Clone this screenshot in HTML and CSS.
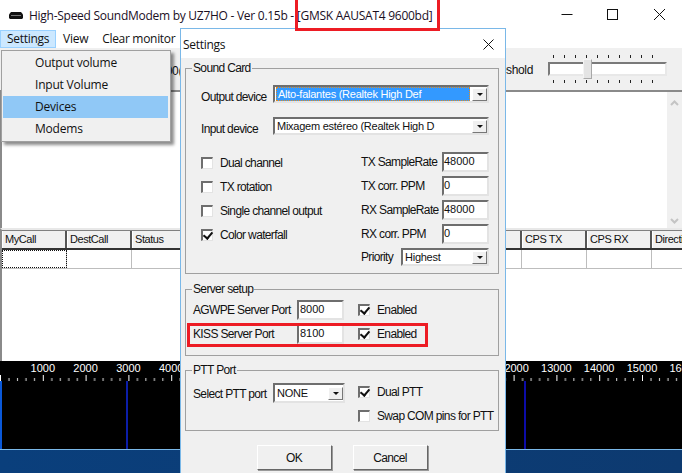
FILE: index.html
```html
<!DOCTYPE html>
<html lang="en">
<head>
<meta charset="utf-8">
<title>High-Speed SoundModem</title>
<link rel="stylesheet" href="styles.css">
</head>
<body>
<div class="app">
  <header class="titlebar">
    <svg class="appicon" width="14" height="7" viewBox="0 0 14 7"><path d="M2 0h10l2 2.500V6l-1 1H1L0 6V2.500z" fill="#111"/><rect x="2" y="3" width="10" height="1" fill="#777"/></svg>
    <span class="titletext">High-Speed SoundModem by UZ7HO - Ver 0.15b - [GMSK AAUSAT4 9600bd]</span>
    <div class="winctrls">
      <svg width="46" height="30" viewBox="0 0 46 30"><path d="M17.500 14.500h11" stroke="#111" fill="none"/></svg>
      <svg width="46" height="30" viewBox="0 0 46 30"><rect x="17.500" y="9.500" width="10" height="10" stroke="#111" fill="none"/></svg>
      <svg width="46" height="30" viewBox="0 0 46 30"><path d="M18 9l11 11M29 9L18 20" stroke="#111" fill="none"/></svg>
    </div>
  </header>
  <nav class="menubar">
    <span class="menuitem open">Settings</span>
    <span class="menuitem">View</span>
    <span class="menuitem">Clear monitor</span>
  </nav>
  <div class="toolbar">
    <span class="tbvalue">1000(</span>
    <span class="thlabel">DCD threshold</span>
    <div class="slider">
      <div class="sl-ticks"></div>
      <div class="sl-track"><div class="sl-thumb"></div></div>
      <div class="sl-ticks"></div>
    </div>
  </div>
  <div class="monitor">
    <div class="scrollbar">
      <svg width="9" height="6" viewBox="0 0 9 6"><path d="M1 5l3.500-3.500L8 5" stroke="#c4c4c4" stroke-width="2" fill="none"/></svg>
      <svg width="9" height="6" viewBox="0 0 9 6"><path d="M1 1l3.500 3.500L8 1" stroke="#c4c4c4" stroke-width="2" fill="none"/></svg>
    </div>
  </div>
  <div class="tablewrap">
    <div class="thead">
      <div class="th">MyCall</div><div class="th">DestCall</div><div class="th">Status</div><div class="th">Sent pkts</div><div class="th">Sent bytes</div><div class="th">Rcvd pkts</div><div class="th">Rcvd bytes</div><div class="th">Rcvd FC</div><div class="th">CPS TX</div><div class="th">CPS RX</div><div class="th">Direction</div>
    </div>
    <div class="trow">
      <div class="td focus"></div><div class="td"></div><div class="td"></div><div class="td"></div><div class="td"></div><div class="td"></div><div class="td"></div><div class="td"></div><div class="td"></div><div class="td"></div><div class="td"></div>
    </div>
  </div>
  <div class="scope">
    <div class="ruler">
      <span></span><span>1000</span><span>2000</span><span>3000</span><span>4000</span><span>5000</span><span>6000</span><span>7000</span><span>8000</span><span>9000</span><span>10000</span><span>11000</span><span>12000</span><span>13000</span><span>14000</span><span>15000</span><span>16000</span>
    </div>
    <svg class="ticks" width="682" height="6" viewBox="0 0 682 6">
      <defs>
        <pattern id="tk" width="42.800" height="6" patternUnits="userSpaceOnUse">
          <rect x="0" y="0" width="1" height="6" fill="#fff"/>
          <rect x="8.500" y="3" width="1" height="3" fill="#ddd"/>
          <rect x="17" y="3" width="1" height="3" fill="#ddd"/>
          <rect x="25.500" y="3" width="1" height="3" fill="#ddd"/>
          <rect x="34" y="3" width="1" height="3" fill="#ddd"/>
        </pattern>
      </defs>
      <rect width="682" height="6" fill="url(#tk)"/>
    </svg>
    <div class="waterfall">
      <i class="wf wf-edge"></i><i class="wf wf-a"></i><i class="wf wf-b"></i>
    </div>
  </div>
  <div class="desktop"></div>
</div>

<div class="dropdown">
  <div class="dd-item">Output volume</div>
  <div class="dd-item">Input Volume</div>
  <div class="dd-item sel">Devices</div>
  <div class="dd-item">Modems</div>
</div>

<section class="dialog">
  <div class="dlg-title">
    <span>Settings</span>
    <svg width="11" height="11" viewBox="0 0 11 11"><path d="M.5.500l10 10M10.500.500l-10 10" stroke="#111" fill="none"/></svg>
  </div>
  <div class="dlg-body">
    <fieldset class="group g-sound">
      <legend>Sound Card</legend>
      <div class="group-in in-sound">
        <div class="devrow"><label>Output device</label><div class="combo wide"><span class="value selected">Alto-falantes (Realtek High Def</span><b class="arrow"></b></div></div>
        <div class="devrow"><label>Input device</label><div class="combo wide"><span class="value">Mixagem estéreo (Realtek High D</span><b class="arrow"></b></div></div>
        <div class="soundcols">
          <div class="checks">
            <label class="chk"><i class="box"></i>Dual channel</label>
            <label class="chk"><i class="box"></i>TX rotation</label>
            <label class="chk"><i class="box"></i>Single channel output</label>
            <label class="chk"><i class="box on"></i>Color waterfall</label>
          </div>
          <div class="rates">
            <div class="rate"><label>TX SampleRate</label><div class="field">48000</div></div>
            <div class="rate"><label>TX corr. PPM</label><div class="field">0</div></div>
            <div class="rate"><label>RX SampleRate</label><div class="field">48000</div></div>
            <div class="rate"><label>RX corr. PPM</label><div class="field">0</div></div>
            <div class="rate prio"><label>Priority</label><div class="combo pr"><span class="value">Highest</span><b class="arrow"></b></div></div>
          </div>
        </div>
      </div>
    </fieldset>
    <fieldset class="group g-server">
      <legend>Server setup</legend>
      <div class="group-in in-server">
        <div class="srv"><label>AGWPE Server Port</label><div class="field port">8000</div><label class="chk"><i class="box on"></i>Enabled</label></div>
        <div class="srv"><label>KISS Server Port</label><div class="field port">8100</div><label class="chk"><i class="box on"></i>Enabled</label></div>
      </div>
    </fieldset>
    <fieldset class="group g-ptt">
      <legend>PTT Port</legend>
      <div class="group-in in-ptt">
        <div class="pttrow">
          <label>Select PTT port</label>
          <div class="combo ptt"><span class="value">NONE</span><b class="arrow"></b></div>
          <div class="pttchecks">
            <label class="chk"><i class="box on"></i>Dual PTT</label>
            <label class="chk"><i class="box"></i>Swap COM pins for PTT</label>
          </div>
        </div>
      </div>
    </fieldset>
    <div class="buttons"><button class="btn">OK</button><button class="btn">Cancel</button></div>
  </div>
</section>

<div class="mark mark-title"></div>
<div class="mark mark-kiss"></div>
</body>
</html>
```
FILE: styles.css
```css
* { box-sizing: border-box; }
html, body { margin: 0; padding: 0; }
body {
  width: 682px; height: 473px; overflow: hidden; position: relative;
  background: #fff; color: #111;
  font: 12px "Liberation Sans", Arial, sans-serif;
}
label { white-space: nowrap; }
.app { display: flex; flex-direction: column; width: 682px; height: 473px; }

.titlebar { height: 30px; flex: none; display: flex; align-items: center; padding-left: 9px; background: #fff; }
.titletext { margin-left: 6px; font-family: "Open Sans", sans-serif; font-size: 12px; letter-spacing: -0.27px; color: #1a0f1f; white-space: nowrap; }
.winctrls { margin-left: auto; display: flex; }
.winctrls svg { display: block; }

.menubar { height: 18px; flex: none; display: flex; background: #fff; font-family: "Open Sans", sans-serif; }
.menuitem { padding: 0 6px; letter-spacing: -0.3px; border: 1px solid transparent; height: 18px; line-height: 16px; white-space: nowrap; }
.menuitem.open { background: #cce8ff; border-color: #99d1ff; }

.toolbar { height: 44px; flex: none; background: #f0f0f0; border-bottom: 2px solid #8a8a8a; display: flex; align-items: center; padding: 0 15px 0 153px; }
.tbvalue { margin-right: auto; margin-top: 3px; letter-spacing: -0.3px; }
.thlabel { margin-right: 15px; margin-top: 1px; letter-spacing: -0.35px; }
.slider { width: 119px; display: flex; flex-direction: column; gap: 4px; }
.sl-ticks { height: 3px; background: repeating-linear-gradient(90deg, #222 0 1px, transparent 1px 11px); margin: 0 5px; }
.sl-track { height: 14px; border: 2px solid; border-color: #7a7a7a #e8e8e8 #e8e8e8 #7a7a7a; background: #fff; position: relative; }
.sl-thumb { position: absolute; left: 33px; top: -5px; width: 9px; height: 20px; background: #e4e4e4; border: 1px solid; border-color: #f4f4f4 #a8a8a8 #a8a8a8 #f4f4f4; }

.monitor { height: 136px; flex: none; background: #fff; border-left: 2px solid #8a8a8a; display: flex; justify-content: flex-end; }
.scrollbar { width: 15px; background: #f0f0f0; display: flex; flex-direction: column; justify-content: space-between; align-items: center; padding: 8px 0 4px; }
.scrollbar svg { display: block; }

.tablewrap { height: 133px; flex: none; background: #fff; border-left: 2px solid #8a8a8a; border-top: 2px solid #e8e8e8; overflow: hidden; }
.thead, .trow { display: flex; width: 730px; }
.thead { height: 20px; background: #f0f0f0; border-top: 1px solid #808080; border-bottom: 2px solid #333; }
.th { width: 65px; flex: none; padding-left: 2px; line-height: 17px; border-right: 2px solid #555; border-left: 1px solid #fff; color: #111; font-size: 11px; letter-spacing: -0.45px; white-space: nowrap; overflow: hidden; }
.trow { height: 19px; border-bottom: 1px solid #bdbdbd; }
.td { width: 65px; flex: none; border-right: 1px solid #bdbdbd; }
.td.focus { outline: 1px dotted #111; outline-offset: -1px; }

.scope { height: 88px; flex: none; background: #000; color: #fff; overflow: hidden; }
.ruler { display: flex; height: 14px; margin-left: -21.400px; padding-top: 1px; }
.ruler span { width: 42.800px; flex: none; text-align: center; line-height: 13px; font-size: 11px; }
.ticks { display: block; }
.waterfall { height: 68px; position: relative; }
.wf { position: absolute; top: 0; bottom: 0; }
.wf-edge { left: 0; width: 2px; background: #0a58d8; }
.wf-a { left: 126px; width: 2px; background: #0c1ea8; }
.wf-b { left: 524px; width: 2px; background: #0c0ca8; }
.desktop { flex: 1; background: linear-gradient(90deg, #0a3f7c, #0d3a70); border-top: 1px solid #7ab8e8; }

.dropdown {
  position: absolute; left: 1px; top: 50px; width: 170px; height: 92px;
  background: #f0f0f0; border: 1px solid #a0a0a0; padding: 1px 2px 0 1px;
  box-shadow: 3px 3px 3px rgba(0,0,0,.45); font-family: "Open Sans", sans-serif;
}
.dd-item { height: 22px; line-height: 21px; padding-left: 32px; letter-spacing: -0.2px; }
.dd-item.sel { background: #90c8f6; }

.dialog {
  position: absolute; left: 180px; top: 28px; width: 326px; height: 445px;
  background: #f0f0f0; border: 1px solid #7ab8e8; border-bottom: 0;
}
.dlg-title { height: 29px; background: #fff; display: flex; align-items: center; justify-content: space-between; padding: 2px 11px 0 2px; font-family: "Open Sans", sans-serif; letter-spacing: -0.3px; }
.dlg-body { padding: 3px 6px 0 4px; letter-spacing: -0.65px; }
.group { margin: 0; padding: 0; border: 1px solid #a0a0a0; min-width: 0; }
.group legend { padding: 0 1px; margin-left: 6px; line-height: 14px; height: 14px; }
.g-sound { height: 213px; }
.g-server { height: 74px; margin-top: 8px; }
.g-ptt { height: 68px; margin-top: 7px; }
.in-sound { padding: 10px 9px 0 15px; }
.in-server { padding: 2px 0 0 7px; }
.in-ptt { padding: 6px 0 0 7px; }

.devrow { display: flex; align-items: center; height: 18px; margin-bottom: 14px; }
.devrow label { width: 72px; flex: none; padding-top: 5px; }
.combo { height: 18px; background: #fff; border: 2px solid; border-color: #6e6e6e #e3e3e3 #e3e3e3 #6e6e6e; display: flex; align-items: center; justify-content: space-between; }
.combo .value { padding-left: 2px; white-space: nowrap; overflow: hidden; flex: 1; line-height: 14px; font-size: 11px; letter-spacing: -0.25px; }
.combo .value.selected { background: #3399ff; color: #fff; outline: 1px dotted #e08a20; outline-offset: -1px; margin: 0 2px 0 1px; }
.wide { width: 216px; }
.arrow { flex: none; width: 15px; height: 13px; background: #f0f0f0; border: 1px solid; border-color: #fff #777 #777 #fff; position: relative; }
.arrow::after { content: ""; position: absolute; left: 4px; top: 4px; border: 3px solid transparent; border-top-color: #111; border-bottom: 0; }

.soundcols { display: flex; justify-content: space-between; margin-top: 17px; }
.checks { display: flex; flex-direction: column; margin-top: -1px; }
.chk { display: flex; align-items: center; height: 24px; }
.box { width: 12px; height: 12px; flex: none; margin-right: 7px; background: #fff; border: solid #e3e3e3; border-width: 2px 1px 1px 2px; border-color: #6e6e6e #e3e3e3 #e3e3e3 #6e6e6e; position: relative; }
.box.on::after { content: ""; position: absolute; left: 2px; top: -1px; width: 4px; height: 7px; border: solid #111; border-width: 0 2px 2px 0; transform: rotate(40deg); }

.rates { display: flex; flex-direction: column; gap: 4px; width: 128px; }
.rate { display: flex; align-items: center; justify-content: space-between; height: 20px; }
.field { width: 47px; height: 20px; background: #fff; border: 2px solid; border-color: #6e6e6e #e3e3e3 #e3e3e3 #6e6e6e; padding-left: 0; line-height: 15px; font-size: 11px; letter-spacing: 0; }
.prio { height: 18px; }
.pr { width: 88px; }

.srv { display: flex; align-items: center; height: 24px; }
.srv > label:first-child { width: 104px; flex: none; }
.port { margin-right: 14px; padding-left: 1px; }
.pttrow { display: flex; align-items: flex-start; }
.pttrow > label { margin-top: 4px; width: 80px; flex: none; }
.ptt { width: 72px; height: 20px; margin-right: 13px; }
.pttchecks { display: flex; flex-direction: column; margin-top: -3px; }

.buttons { display: flex; gap: 21px; justify-content: center; margin-top: 14px; }
.btn { width: 75px; height: 25px; background: #f0f0f0; border: 1px solid; border-color: #fff #666 #666 #fff; box-shadow: 1px 1px 0 #999; font: 12px "Liberation Sans", Arial, sans-serif; letter-spacing: -0.65px; color: #111; padding: 0; }

.mark { position: absolute; border: 3px solid #ed1c24; pointer-events: none; }
.mark-title { left: 295px; top: -3px; width: 145px; height: 34px; }
.mark-kiss { left: 187px; top: 323px; width: 241px; height: 24px; }
```
